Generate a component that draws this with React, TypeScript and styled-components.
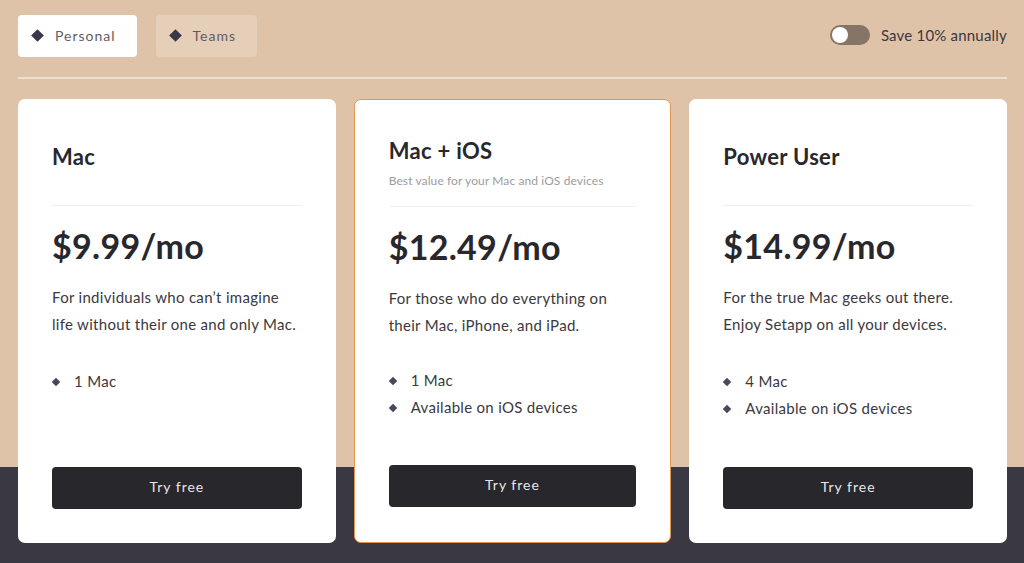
import styled, {createGlobalStyle} from "styled-components";

const GlobalStyle = createGlobalStyle`
    * {
        box-sizing: border-box;
    }

    body {
        margin: 0;
        font-family: Lato, "Open Sans", sans-serif;
        color: #28272c;
    }
`

type Plan = {
    title: string
    subtitle?: string
    price: string
    text: string[]
    features: string[]
    featured?: boolean
}

const plans: Plan[] = [
    {
        title: 'Mac',
        price: '$9.99/mo',
        text: ['For individuals who can’t imagine', 'life without their one and only Mac.'],
        features: ['1 Mac'],
    },
    {
        title: 'Mac + iOS',
        subtitle: 'Best value for your Mac and iOS devices',
        price: '$12.49/mo',
        text: ['For those who do everything on', 'their Mac, iPhone, and iPad.'],
        features: ['1 Mac', 'Available on iOS devices'],
        featured: true,
    },
    {
        title: 'Power User',
        price: '$14.99/mo',
        text: ['For the true Mac geeks out there.', 'Enjoy Setapp on all your devices.'],
        features: ['4 Mac', 'Available on iOS devices'],
    },
]

const Diamond = ({size = 9}: { size?: number }) => (
    <DiamondBox $size={size}/>
)

export default function App() {
    return (
        <>
            <GlobalStyle/>
            <Page>
                <TopBar>
                    <Tabs>
                        <Tab $active><Diamond/>Personal</Tab>
                        <Tab><Diamond/>Teams</Tab>
                    </Tabs>
                    <Annual>
                        <Toggle><Knob/></Toggle>
                        Save 10% annually
                    </Annual>
                </TopBar>
                <Divider/>
                <Cards>
                    {plans.map(plan => (
                        <Card key={plan.title} $featured={plan.featured}>
                            <CardHeader $withSubtitle={!!plan.subtitle}>
                                <CardTitle>{plan.title}</CardTitle>
                                {plan.subtitle && <Subtitle>{plan.subtitle}</Subtitle>}
                            </CardHeader>
                            <Price>{plan.price}</Price>
                            <Description>
                                {plan.text[0]}<br/>{plan.text[1]}
                            </Description>
                            <Features $featured={plan.featured}>
                                {plan.features.map(f => (
                                    <Feature key={f}><Diamond size={6}/>{f}</Feature>
                                ))}
                            </Features>
                            <TryButton>Try free</TryButton>
                        </Card>
                    ))}
                </Cards>
            </Page>
        </>
    );
}

const Page = styled.div`
    min-height: 563px;
    padding: 15px 17px 21px 18px;
    background: linear-gradient(to bottom, #dfc3a8 467px, #3a3843 467px);
`

const TopBar = styled.div`
    display: flex;
    justify-content: space-between;
    align-items: center;
`

const Tabs = styled.div`
    display: flex;
    gap: 19px;
`

const Tab = styled.div<{ $active?: boolean }>`
    display: flex;
    align-items: center;
    gap: 13px;
    height: 42px;
    padding: 0 21px 2px 15px;
    border-radius: 4px;
    background: ${p => p.$active ? '#ffffff' : '#e6cfb8'};
    font-size: 14px;
    letter-spacing: 1px;
    color: #625c66;
`

const DiamondBox = styled.span<{ $size: number }>`
    display: inline-block;
    flex-shrink: 0;
    width: ${p => p.$size}px;
    height: ${p => p.$size}px;
    background: #3a3848;
    transform: rotate(45deg);
`

const Annual = styled.div`
    display: flex;
    align-items: center;
    gap: 11px;
    padding-bottom: 3px;
    font-size: 15px;
    letter-spacing: 0.2px;
    color: #3b3640;
`

const Toggle = styled.div`
    display: flex;
    align-items: center;
    width: 40px;
    height: 20px;
    padding: 0 2px;
    border-radius: 10px;
    background: #867567;
`

const Knob = styled.span`
    width: 16px;
    height: 16px;
    border-radius: 50%;
    background: #ffffff;
`

const Divider = styled.div`
    height: 2px;
    margin: 20px 0 20px;
    background: #eee0d1;
`

const Cards = styled.div`
    display: grid;
    grid-template-columns: repeat(3, 1fr);
    gap: 18px;
`

const Card = styled.div<{ $featured?: boolean }>`
    display: flex;
    flex-direction: column;
    height: 444px;
    padding: 0 34px ${p => p.$featured ? '35px' : '34px'};
    border-radius: 7px;
    background: #ffffff;
    border: ${p => p.$featured ? '1px solid #e4964f' : 'none'};
`

const CardHeader = styled.div<{ $withSubtitle?: boolean }>`
    display: flex;
    flex-direction: column;
    height: 107px;
    padding-top: ${p => p.$withSubtitle ? '38px' : '45px'};
    border-bottom: 1px solid #f2eee9;
`

const CardTitle = styled.h3`
    margin: 0;
    font-size: 22px;
    line-height: 26px;
    letter-spacing: 0.3px;
    font-weight: 700;
    color: #28272c;
`

const Subtitle = styled.p`
    margin: 9px 0 0;
    font-size: 12px;
    letter-spacing: 0.1px;
    color: #9d9b9e;
`

const Price = styled.div`
    margin-top: 20px;
    font-size: 34px;
    line-height: 40px;
    letter-spacing: 0.3px;
    font-weight: 700;
    color: #28272c;
`

const Description = styled.p`
    margin: 18px 0 0;
    font-size: 15px;
    line-height: 27px;
    letter-spacing: 0.3px;
    color: #3a393e;
`

const Features = styled.ul<{ $featured?: boolean }>`
    list-style: none;
    margin: ${p => p.$featured ? '28px' : '30px'} 0 0;
    padding: 0;
`

const Feature = styled.li`
    display: flex;
    align-items: center;
    gap: 15px;
    font-size: 15px;
    line-height: 27px;
    letter-spacing: 0.3px;
    color: #3a393e;

    span {
        margin-left: 1px;
        background: #4a4858;
    }
`

const TryButton = styled.button`
    margin-top: auto;
    height: 42px;
    padding: 0 0 3px;
    border: none;
    border-radius: 4px;
    background: #28272c;
    color: #e6e6e8;
    font-family: Lato, sans-serif;
    font-size: 14px;
    letter-spacing: 1px;
    cursor: pointer;
`
